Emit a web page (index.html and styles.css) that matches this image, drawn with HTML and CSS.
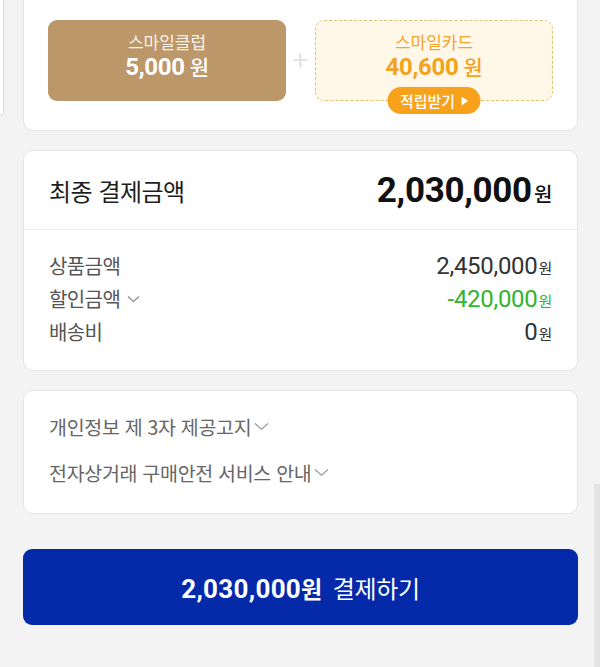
FILE: index.html
```html
<!DOCTYPE html>
<html lang="ko">
<head>
<meta charset="utf-8">
<link rel="stylesheet" href="styles.css">
</head>
<body>
<div class="page">
  <div class="top-row">
    <div class="sliver"></div>
    <section class="card reward-card">
      <div class="reward-box club">
        <div class="reward-name">스마일클럽</div>
        <div class="reward-amount">5,000<span class="won">원</span></div>
      </div>
      <div class="plus">+</div>
      <div class="reward-box smile">
        <div class="reward-name">스마일카드</div>
        <div class="reward-amount">40,600<span class="won">원</span></div>
        <button class="earn-btn">적립받기<svg width="8" height="10" viewBox="0 0 8 10"><path d="M1 0.5 L7.5 5 L1 9.5 Z" fill="#fff"/></svg></button>
      </div>
    </section>
  </div>

  <section class="card total-card">
    <div class="total-head">
      <div class="total-title">최종 결제금액</div>
      <div class="total-amount">2,030,000<span class="won">원</span></div>
    </div>
    <div class="total-rows">
      <div class="row"><span class="label">상품금액</span><span class="value">2,450,000<span class="won">원</span></span></div>
      <div class="row"><span class="label">할인금액<svg class="chev" width="13" height="8" viewBox="0 0 13 8"><path d="M1 1.5 L6.5 6.5 L12 1.5" fill="none" stroke="#8a8a8a" stroke-width="1.2"/></svg></span><span class="value green">-420,000<span class="won">원</span></span></div>
      <div class="row"><span class="label">배송비</span><span class="value">0<span class="won">원</span></span></div>
    </div>
  </section>

  <section class="card notice-card">
    <div class="notice">개인정보 제 3자 제공고지<svg class="chev" width="15" height="9" viewBox="0 0 15 9"><path d="M1 1.5 L7.5 7.3 L14 1.5" fill="none" stroke="#9a9a9a" stroke-width="1.2"/></svg></div>
    <div class="notice">전자상거래 구매안전 서비스 안내<svg class="chev" width="15" height="9" viewBox="0 0 15 9"><path d="M1 1.5 L7.5 7.3 L14 1.5" fill="none" stroke="#9a9a9a" stroke-width="1.2"/></svg></div>
  </section>

  <button class="pay-btn"><span class="pay-amount">2,030,000<span class="pay-won">원</span></span> 결제하기</button>
</div>
<div class="scroll-thumb"></div>
</body>
</html>
```

FILE: styles.css
```css
html, body {
  margin: 0;
  padding: 0;
}
body {
  background: #f3f3f3;
  font-family: Roboto, "Noto Sans CJK KR", "Noto Sans", sans-serif;
  color: #222;
  width: 600px;
  height: 667px;
  overflow: hidden;
  position: relative;
}
.page {
  display: flex;
  flex-direction: column;
  padding-right: 22px;
}
.card {
  background: #fff;
  border: 1px solid #e5e5e5;
  border-radius: 10px;
  box-sizing: border-box;
}
.top-row {
  display: flex;
  align-items: flex-start;
}
.sliver {
  width: 3px;
  height: 115px;
  background: #fff;
  border-right: 1px solid #dcdcdc;
  border-bottom: 1px solid #dcdcdc;
  border-bottom-right-radius: 8px;
}
.reward-card {
  margin-left: 19px;
  flex: 1;
  height: 131px;
  border-top: none;
  border-top-left-radius: 0;
  border-top-right-radius: 0;
  display: flex;
  align-items: flex-start;
  padding: 20px 24px 0 24px;
}
.reward-box {
  width: 238px;
  height: 81px;
  box-sizing: border-box;
  border-radius: 9px;
  display: flex;
  flex-direction: column;
  align-items: center;
  padding-top: 11px;
  position: relative;
}
.club {
  background: #bc9769;
  color: #fff;
}
.smile {
  background: #fff8e9;
  border: 1.5px dashed #dcc272;
  color: #f2a31e;
  padding-top: 10px;
}
.reward-name {
  font-family: "Noto Sans CJK KR", sans-serif;
  font-size: 17px;
  line-height: 22px;
  font-weight: 400;
}
.club .reward-name { color: #f8f1e8; }
.smile .reward-name { color: #f0a632; }
.reward-amount {
  font-size: 24px;
  line-height: 26px;
  font-weight: 700;
  letter-spacing: -0.3px;
}
.reward-amount .won {
  font-family: "Noto Sans CJK KR", sans-serif;
  font-size: 21px;
  font-weight: 500;
  margin-left: 5px;
}
.plus {
  width: 29px;
  text-align: center;
  color: #dcdcdc;
  font-size: 28px;
  font-weight: 300;
  line-height: 28px;
  margin-top: 27px;
}
.earn-btn {
  position: absolute;
  left: 50%;
  transform: translateX(-50%);
  top: 66px;
  height: 27px;
  width: 93px;
  border: none;
  border-radius: 14px;
  background: #f7a21a;
  color: #fff;
  font-family: "Noto Sans CJK KR", sans-serif;
  font-size: 15px;
  font-weight: 500;
  display: flex;
  align-items: center;
  justify-content: center;
  gap: 5px;
  padding: 0;
}
.total-card {
  margin: 19px 0 0 23px;
  height: 221px;
}
.total-head {
  height: 78px;
  display: flex;
  align-items: center;
  justify-content: space-between;
  padding: 0 25px;
  border-bottom: 1px solid #ececec;
}
.total-title {
  font-family: "Noto Sans CJK KR", sans-serif;
  font-size: 24px;
  font-weight: 400;
  color: #1e1e1e;
  letter-spacing: -0.5px;
}
.total-amount {
  font-size: 35px;
  font-weight: 700;
  color: #111;
  letter-spacing: -0.3px;
}
.total-amount .won {
  font-family: "Noto Sans CJK KR", sans-serif;
  font-size: 20px;
  font-weight: 500;
  margin-left: 2px;
}
.total-rows {
  padding: 19px 25px 0 25px;
}
.row {
  display: flex;
  justify-content: space-between;
  align-items: center;
  height: 33px;
}
.label {
  font-family: "Noto Sans CJK KR", sans-serif;
  font-size: 20px;
  color: #555;
  display: flex;
  align-items: center;
  gap: 7px;
  letter-spacing: -0.6px;
}
.value {
  font-size: 24px;
  color: #333;
  letter-spacing: -0.3px;
}
.value .won {
  font-family: "Noto Sans CJK KR", sans-serif;
  font-size: 15px;
  margin-left: 1px;
}
.green { color: #2fb52f; }
.notice-card {
  margin: 19px 0 0 23px;
  height: 124px;
  padding: 12px 25px 0 25px;
}
.notice {
  font-family: "Noto Sans CJK KR", sans-serif;
  font-size: 19.5px;
  color: #666;
  height: 46px;
  display: flex;
  align-items: center;
  gap: 3px;
  letter-spacing: -0.3px;
}
.pay-btn {
  margin: 35px 0 0 23px;
  height: 76px;
  border: none;
  border-radius: 9px;
  background: #0429a9;
  color: #fff;
  font-family: "Noto Sans CJK KR", sans-serif;
  font-size: 24px;
  letter-spacing: -0.3px;
  padding: 0;
}
.pay-amount {
  font-family: Roboto, "Noto Sans CJK KR", sans-serif;
  font-size: 26px;
  font-weight: 700;
  letter-spacing: 0.3px;
  margin-right: 4px;
}
.pay-won {
  font-family: "Noto Sans CJK KR", sans-serif;
  font-size: 23px;
  letter-spacing: 0;
}
.scroll-thumb {
  position: absolute;
  right: 0;
  top: 484px;
  width: 6px;
  height: 183px;
  background: #e3e3e3;
}
```
